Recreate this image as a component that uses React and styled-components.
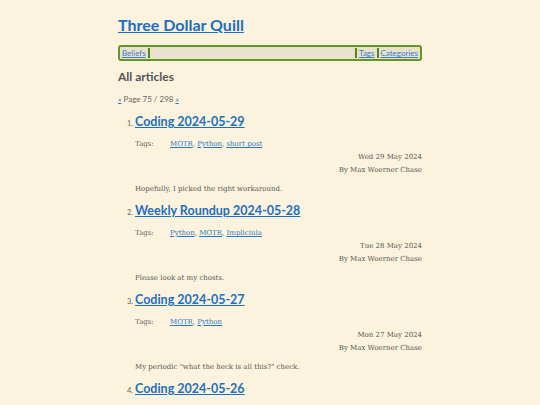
import React from "react";
import styled, { createGlobalStyle } from "styled-components";

const articles = [
  {
    title: "Coding 2024-05-29",
    tags: ["MOTR", "Python", "short post"],
    date: "Wed 29 May 2024",
    summary: "Hopefully, I picked the right workaround.",
  },
  {
    title: "Weekly Roundup 2024-05-28",
    tags: ["Python", "MOTR", "Impliciula"],
    date: "Tue 28 May 2024",
    summary: "Please look at my chosts.",
  },
  {
    title: "Coding 2024-05-27",
    tags: ["MOTR", "Python"],
    date: "Mon 27 May 2024",
    summary: 'My periodic "what the heck is all this?" check.',
  },
  {
    title: "Coding 2024-05-26",
    tags: ["MOTR", "Python"],
    date: "Sun 26 May 2024",
    summary: "More of the same.",
  },
];

function App() {
  return (
    <>
      <GlobalStyle />
      <Page>
        <SiteTitle>
          <a href="#">Three Dollar Quill</a>
        </SiteTitle>
        <Nav>
          <NavLink href="#">Beliefs</NavLink>
          <Sep />
          <Spacer />
          <Sep />
          <NavLink href="#">Tags</NavLink>
          <Sep />
          <NavLink href="#">Categories</NavLink>
        </Nav>
        <Heading>All articles</Heading>
        <Pager>
          <a href="#">«</a> Page 75 / 298 <a href="#">»</a>
        </Pager>
        <List>
          {articles.map((a) => (
            <Item key={a.title}>
              <ItemTitle>
                <a href="#">{a.title}</a>
              </ItemTitle>
              <TagRow>
                <TagLabel>Tags:</TagLabel>
                <span>
                  {a.tags.map((t, i) => (
                    <React.Fragment key={t}>
                      <a href="#">{t}</a>
                      {i < a.tags.length - 1 ? ", " : ""}
                    </React.Fragment>
                  ))}
                </span>
              </TagRow>
              <Meta>
                {a.date}
                <br />
                By Max Woerner Chase
              </Meta>
              <Summary>{a.summary}</Summary>
            </Item>
          ))}
        </List>
      </Page>
    </>
  );
}

const GlobalStyle = createGlobalStyle`
  html, body {
    margin: 0;
    background: #fbf3dd;
  }
  body {
    font-family: "DejaVu Serif", serif;
    color: #555;
  }
  a {
    color: #2a78c6;
  }
`;

const Page = styled.div`
  width: 304px;
  margin: 0 auto;
  padding-top: 13px;
`;

const SiteTitle = styled.h1`
  margin: 0 0 8px;
  font-family: "Lato", sans-serif;
  font-size: 16px;
  line-height: 24px;
  font-weight: 700;
  a {
    color: #1c6fc2;
  }
`;

const Nav = styled.nav`
  display: flex;
  align-items: stretch;
  height: 10px;
  padding: 1px 1px;
  border: 2px solid #62962a;
  border-radius: 3px;
  background: #e9e1cb;
  font-family: "Lato", sans-serif;
  font-size: 8px;
  line-height: 10px;
`;

const NavLink = styled.a`
  padding: 0 1px;
  color: #3a80c4;
`;

const Sep = styled.span`
  width: 2px;
  background: #4e8a1c;
  margin: 0 1px;
`;

const Spacer = styled.span`
  flex: 1;
`;

const Heading = styled.h2`
  margin: 8px 0 8px;
  font-family: "Lato", sans-serif;
  font-size: 12px;
  line-height: 16px;
  font-weight: 700;
  color: #555;
`;

const Pager = styled.p`
  margin: 0 0 9px;
  font-family: "Lato", sans-serif;
  font-size: 8px;
  line-height: 12px;
  color: #666;
`;

const List = styled.ol`
  margin: 0;
  padding-left: 17px;
  font-size: 7.5px;
  color: #666;
`;

const Item = styled.li`
  margin-bottom: 8px;
  &::marker {
    font-family: "Lato", sans-serif;
  }
`;

const ItemTitle = styled.h3`
  margin: 0 0 8px;
  font-family: "Lato", sans-serif;
  font-size: 12.5px;
  line-height: 16px;
  font-weight: 700;
  a {
    color: #1c6fc2;
  }
`;

const TagRow = styled.div`
  display: flex;
  font-size: 7px;
  line-height: 12px;
  a {
    color: #2a78c6;
  }
`;

const TagLabel = styled.span`
  width: 35px;
`;

const Meta = styled.div`
  margin-top: 1px;
  text-align: right;
  font-size: 7px;
  line-height: 12.5px;
  color: #555;
`;

const Summary = styled.p`
  margin: 7px 0 0;
  font-size: 7px;
  line-height: 12px;
  color: #555;
`;

export default App;
